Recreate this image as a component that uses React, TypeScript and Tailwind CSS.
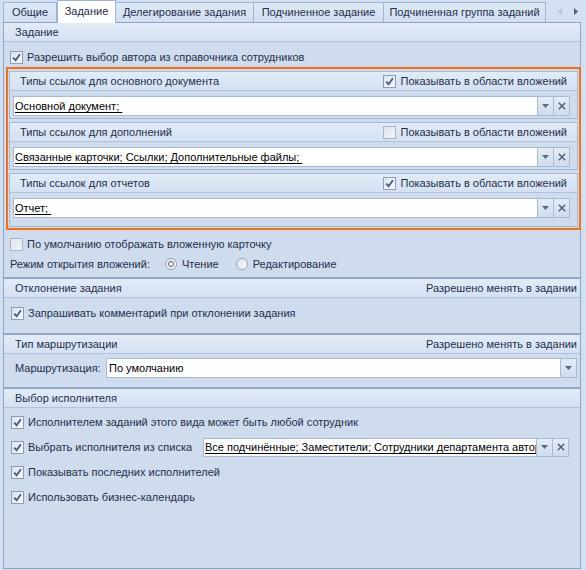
import React from "react";

function Check({ checked }: { checked: boolean }) {
  return (
    <span
      className={`flex h-[13px] w-[13px] shrink-0 items-center justify-center border ${
        checked
          ? "border-[#8e9db5] bg-gradient-to-br from-[#dde3eb] to-[#f8fafc]"
          : "border-[#a7b5c9] bg-gradient-to-br from-[#dfe5ed] to-[#f1f4f8]"
      }`}
    >
      {checked && (
        <svg width="9" height="9" viewBox="0 0 9 9">
          <path d="M1.2 4.6 L3.6 7.2 L7.9 1.2" fill="none" stroke="#4d5f7e" strokeWidth="1.9" />
        </svg>
      )}
    </span>
  );
}

function Radio({ checked }: { checked: boolean }) {
  return (
    <span className="flex h-[12px] w-[12px] shrink-0 items-center justify-center rounded-full border border-[#95a3b8] bg-gradient-to-br from-[#dfe4eb] to-[#f9fafc]">
      {checked && <span className="h-[6px] w-[6px] rounded-full border-[1.5px] border-[#56657f] bg-[#eef1f5]" />}
    </span>
  );
}

function DropBtn() {
  return (
    <div className="flex w-[16px] shrink-0 items-center justify-center border border-l-0 border-[#a9bad3] bg-gradient-to-b from-[#e4ecf6] to-[#cfdcee]">
      <svg width="7" height="4" viewBox="0 0 7 4">
        <polygon points="0,0 7,0 3.5,4" fill="#5a6984" />
      </svg>
    </div>
  );
}

function ClearBtn() {
  return (
    <div className="flex w-[16px] shrink-0 items-center justify-center border border-l-0 border-[#a9bad3] bg-gradient-to-b from-[#e4ecf6] to-[#cfdcee]">
      <svg width="8" height="8" viewBox="0 0 8 8">
        <path d="M0.8 0.8 L7.2 7.2 M7.2 0.8 L0.8 7.2" stroke="#4f5d78" strokeWidth="1.4" />
      </svg>
    </div>
  );
}

function LinkInput({ value, clear = true, height = "h-[20px]" }: { value: string; clear?: boolean; height?: string }) {
  return (
    <div className={`flex ${height} flex-1 min-w-0`}>
      <div className="flex min-w-0 flex-1 items-center overflow-hidden whitespace-nowrap border border-[#a9bad3] bg-white pl-[1px] text-black">
        <span className="underline underline-offset-[2px] [text-decoration-skip-ink:none]">{value}</span>
      </div>
      <DropBtn />
      {clear && <ClearBtn />}
    </div>
  );
}

function SectionHeader({ title, right }: { title: string; right?: string }) {
  return (
    <div className="flex h-[19px] shrink-0 items-center justify-between border-b border-[#b1c3db] bg-gradient-to-b from-[#e2ebf7] to-[#d4e1f2] pl-[11px] pr-[3px]">
      <span>{title}</span>
      {right && <span>{right}</span>}
    </div>
  );
}

function LinkGroup({ title, show, value, tall }: { title: string; show: boolean; value: string; tall?: boolean }) {
  return (
    <div className="border border-[#a6b9d4] bg-[#cfdcee]">
      <div className="flex h-[19px] items-center justify-between border-b border-[#b1c3db] bg-gradient-to-b from-[#e2ebf7] to-[#d4e1f2] pl-[10px] pr-[10px] pt-[1px]">
        <span>{title}</span>
        <span className="flex items-center gap-[4px]">
          <Check checked={show} />
          <span>Показывать в области вложений</span>
        </span>
      </div>
      <div className={`flex pl-[3px] pr-[7px] pt-[5px] ${tall ? "pb-[8px]" : "pb-[2px]"}`}>
        <LinkInput value={value} />
      </div>
    </div>
  );
}

function CheckRow({ checked, label, className = "" }: { checked: boolean; label: string; className?: string }) {
  return (
    <div className={`flex h-[20px] items-center gap-[4px] ${className}`}>
      <Check checked={checked} />
      <span className="whitespace-nowrap">{label}</span>
    </div>
  );
}

const tabs = [
  { label: "Общие", w: "w-[54px]" },
  { label: "Задание", w: "w-[59px]", active: true },
  { label: "Делегирование задания", w: "w-[139px]" },
  { label: "Подчиненное задание", w: "w-[131px]" },
  { label: "Подчиненная группа заданий", w: "w-[163px]" },
];

export default function App() {
  return (
    <div className="h-[570px] w-[586px] overflow-hidden bg-[#d3e0f1] font-['Liberation_Sans',Arial,sans-serif] text-[11px] text-[#1f2f4b]">
      {/* Tabs */}
      <div className="relative z-10 flex h-[22px] items-end pl-[3px]">
        {tabs.map((t) =>
          t.active ? (
            <div
              key={t.label}
              className={`${t.w} -mb-px flex h-[23px] items-center justify-center border border-b-0 border-[#a1b5d1] bg-white pb-[1px]`}
            >
              {t.label}
            </div>
          ) : (
            <div
              key={t.label}
              className={`${t.w} -ml-px flex h-[20px] items-center justify-center border border-b-0 border-[#a1b5d1] bg-gradient-to-b from-[#dde8f5] to-[#d2dff0] first:ml-0`}
            >
              {t.label}
            </div>
          )
        )}
        <div className="ml-auto flex h-[22px] items-center gap-[12px] pr-[8px]">
          <svg width="4" height="7" viewBox="0 0 4 7">
            <polygon points="4,0 4,7 0,3.5" fill="#b9c5d6" />
          </svg>
          <svg width="4" height="7" viewBox="0 0 4 7">
            <polygon points="0,0 0,7 4,3.5" fill="#4f5d77" />
          </svg>
        </div>
      </div>

      {/* Panel */}
      <div className="ml-[3px] flex h-[547px] w-[578px] flex-col border border-[#8fa4c4] bg-[#cfdcee]">
        {/* Задание */}
        <div className="flex h-[254px] shrink-0 flex-col">
          <SectionHeader title="Задание" />
          <div className="flex flex-col pt-[5px]">
            <CheckRow checked label="Разрешить выбор автора из справочника сотрудников" className="pl-[6px]" />
            <div className="ml-[2px] mr-[-1px] flex flex-col gap-[3px] border-2 border-[#f86e14] px-[1px] pt-[2px] pb-[1px]">
              <LinkGroup title="Типы ссылок для основного документа" show value={"Основной документ;\u00a0"} />
              <LinkGroup title="Типы ссылок для дополнений" show={false} value={"Связанные карточки; Ссылки; Дополнительные файлы;\u00a0"} />
              <LinkGroup title="Типы ссылок для отчетов" show value={"Отчет;\u00a0"} tall />
            </div>
            <CheckRow checked={false} label="По умолчанию отображать вложенную карточку" className="mt-[4px] pl-[6px]" />
            <div className="flex h-[20px] items-center pl-[6px]">
              <span className="w-[155px]">Режим открытия вложений:</span>
              <span className="flex items-center gap-[5px]">
                <Radio checked />
                <span>Чтение</span>
              </span>
              <span className="ml-[17px] flex items-center gap-[5px]">
                <Radio checked={false} />
                <span>Редактирование</span>
              </span>
            </div>
          </div>
        </div>

        {/* Отклонение задания */}
        <div className="flex h-[56px] shrink-0 flex-col border-t-2 border-[#95a9c7]">
          <SectionHeader title="Отклонение задания" right="Разрешено менять в задании" />
          <div className="pt-[5px] pl-[7px]">
            <CheckRow checked label="Запрашивать комментарий при отклонении задания" />
          </div>
        </div>

        {/* Тип маршрутизации */}
        <div className="flex h-[54px] shrink-0 flex-col border-t-2 border-[#95a9c7]">
          <SectionHeader title="Тип маршрутизации" right="Разрешено менять в задании" />
          <div className="flex items-center pt-[4px] pl-[11px] pr-[3px]">
            <span className="w-[91px]">Маршрутизация:</span>
            <div className="flex h-[20px] flex-1">
              <div className="flex flex-1 items-center border border-[#a9bad3] bg-white pl-[2px] text-black">По умолчанию</div>
              <DropBtn />
            </div>
          </div>
        </div>

        {/* Выбор исполнителя */}
        <div className="flex flex-1 flex-col border-t-2 border-[#95a9c7]">
          <SectionHeader title="Выбор исполнителя" />
          <div className="flex flex-col gap-[5px] pt-[4px] pl-[7px]">
            <CheckRow checked label="Исполнителем заданий этого вида может быть любой сотрудник" />
            <div className="flex items-center">
              <CheckRow checked label="Выбрать исполнителя из списка" className="w-[192px]" />
              <div className="flex w-[366px]">
                <LinkInput value="Все подчинённые; Заместители; Сотрудники департамента автора" height="h-[19px]" />
              </div>
            </div>
            <CheckRow checked label="Показывать последних исполнителей" />
            <CheckRow checked label="Использовать бизнес-календарь" />
          </div>
        </div>
      </div>
    </div>
  );
}
